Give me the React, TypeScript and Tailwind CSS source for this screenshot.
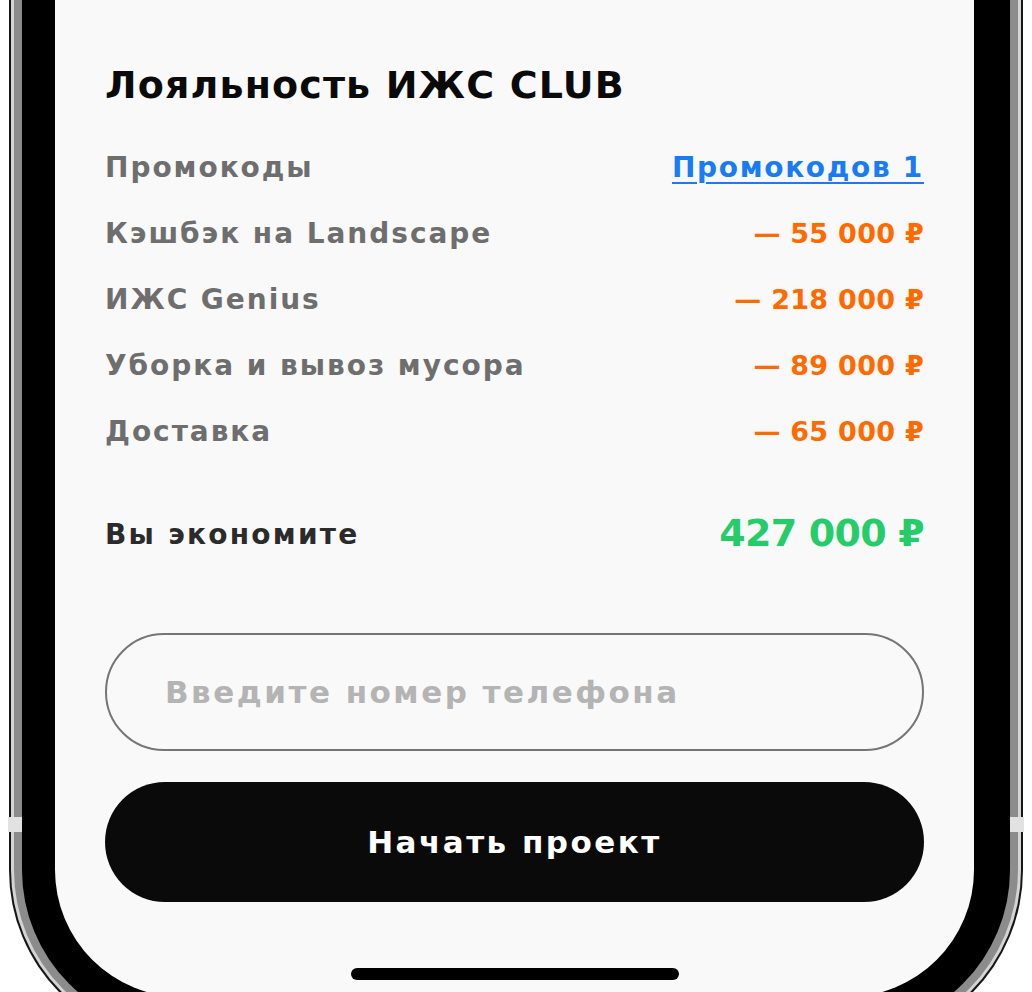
const font = { fontFamily: '"DejaVu Sans", "Liberation Sans", sans-serif' };

const rows = [
  { label: "Кэшбэк на Landscape", value: "— 55 000 ₽" },
  { label: "ИЖС Genius", value: "— 218 000 ₽" },
  { label: "Уборка и вывоз мусора", value: "— 89 000 ₽" },
  { label: "Доставка", value: "— 65 000 ₽" },
];

function Row({ label, children }: { label: string; children: React.ReactNode }) {
  return (
    <div className="flex h-[66px] items-center justify-between">
      <span className="text-[28px] font-bold tracking-[0.07em] text-[#6e6e6e]">{label}</span>
      {children}
    </div>
  );
}

export default function App() {
  return (
    <div className="relative h-[992px] w-[1032px] overflow-hidden bg-white px-[9px]" style={font}>
      {/* phone frame, top is cut off by the viewport */}
      <div className="h-[1044px] rounded-b-[174px] bg-[#161616] px-[2px] pb-[2px]">
        <div className="h-full rounded-b-[172px] bg-[#d4d4d4] px-[3px] pb-[3px]">
          <div className="h-full rounded-b-[169px] bg-[#8c8c8c] px-[8px] pb-[8px]">
            <div className="h-full rounded-b-[161px] bg-black pb-[34px] pl-[33px] pr-[36px]">
              <div className="flex h-full flex-col rounded-b-[127px] bg-[#f9f9f9] px-[50px] pt-[62px]">
                <h2 className="text-[38px] font-bold leading-[46px] tracking-[0.03em] text-[#0a0a0a]">
                  Лояльность ИЖС CLUB
                </h2>

                <div className="mt-[27px]">
                  <Row label="Промокоды">
                    <a className="text-[28px] font-bold tracking-[0.06em] text-[#1a7cf4] underline decoration-2 underline-offset-[5px]">
                      Промокодов 1
                    </a>
                  </Row>
                  {rows.map((r) => (
                    <Row key={r.label} label={r.label}>
                      <span className="text-[27px] font-bold tracking-[0.01em] text-[#ff6a00]">{r.value}</span>
                    </Row>
                  ))}
                </div>

                <div className="mt-[35px] flex h-[66px] items-center justify-between">
                  <span className="mt-[4px] text-[28px] font-bold tracking-[0.08em] text-[#2b2b2b]">Вы экономите</span>
                  <span className="text-[38px] font-bold tracking-[-0.02em] text-[#26cc6a]">427 000 ₽</span>
                </div>

                <div className="mt-[67px] flex h-[118px] items-center rounded-full border-2 border-[#757575] px-[58px]">
                  <span className="text-[31px] font-bold tracking-[0.08em] text-[#b4b4b4]">
                    Введите номер телефона
                  </span>
                </div>

                <button className="mt-[31px] flex h-[120px] items-center justify-center rounded-full bg-[#0a0a0a] text-[31px] font-bold tracking-[0.08em] text-white">
                  Начать проект
                </button>

                <div className="mx-auto mt-[66px] h-[12px] w-[328px] rounded-full bg-black" />
              </div>
            </div>
          </div>
        </div>
      </div>

      {/* antenna bands */}
      <div className="absolute left-[8px] top-[817px] h-[15px] w-[14px] bg-[#e2e2e2]" />
      <div className="absolute left-[1010px] top-[817px] h-[15px] w-[14px] bg-[#e2e2e2]" />
    </div>
  );
}
